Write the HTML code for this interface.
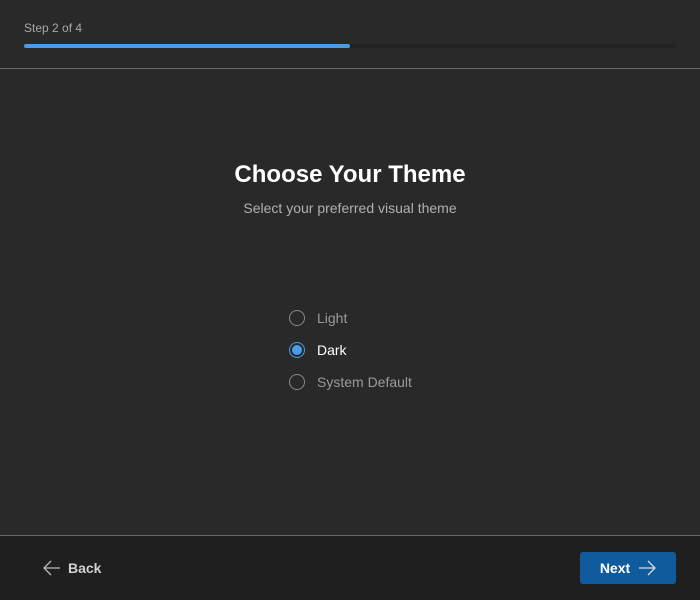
<!DOCTYPE html>
<html><head><meta charset="utf-8"><style>
*{margin:0;padding:0;box-sizing:border-box}
body{width:700px;height:600px;background:#292929;font-family:"Liberation Sans",sans-serif;position:relative;overflow:hidden}
.step{position:absolute;left:24px;top:21px;font-size:12px;color:#a8a8a8}
.track{position:absolute;left:24px;top:44px;width:652px;height:4px;background:#232323;border-radius:2px}
.fill{width:326px;height:4px;background:#4a9bea;border-radius:2px}
.hr1{position:absolute;left:0;top:68px;width:700px;height:1px;background:#6a6a6a}
h1{position:absolute;top:161px;width:700px;text-align:center;font-size:24px;font-weight:bold;color:#fff}
.sub{position:absolute;top:200px;width:700px;text-align:center;font-size:14px;color:#b0b0b0}
.opt{position:absolute;left:289px;height:16px;display:flex;align-items:center;font-size:14px;color:#9a9a9a}
.r{width:16px;height:16px;border:1.5px solid #8a8a8a;border-radius:50%;margin-right:12px;display:flex;align-items:center;justify-content:center}
.sel .r{border-color:#4a9bea}
.sel .r::after{content:"";width:10px;height:10px;border-radius:50%;background:#4a9bea}
.sel{color:#fff}
.foot{position:absolute;left:0;top:535px;width:700px;height:65px;background:#1f1f1f;border-top:1px solid #6a6a6a}
.back{position:absolute;left:43px;top:24px;font-size:14px;font-weight:bold;color:#d0d0d0;display:flex;align-items:center}
.next{position:absolute;left:580px;top:16px;width:96px;height:32px;background:#105a9e;border-radius:3px;color:#fff;font-size:14px;font-weight:bold;display:flex;align-items:center;justify-content:center}
svg{display:block}
</style></head><body>
<div class="step">Step 2 of 4</div>
<div class="track"><div class="fill"></div></div>
<div class="hr1"></div>
<h1>Choose Your Theme</h1>
<div class="sub">Select your preferred visual theme</div>
<div class="opt" style="top:310px"><div class="r"></div>Light</div>
<div class="opt sel" style="top:342px"><div class="r"></div>Dark</div>
<div class="opt" style="top:374px"><div class="r"></div>System Default</div>
<div class="foot">
<div class="back"><svg width="18" height="16" viewBox="0 0 18 16" style="margin-right:7px"><path d="M17 8H2M8 1L1 8l7 7" fill="none" stroke="#bbb" stroke-width="1.3"/></svg>Back</div>
<div class="next">Next<svg width="18" height="16" viewBox="0 0 18 16" style="margin-left:8px"><path d="M1 8h15M10 1l7 7-7 7" fill="none" stroke="#ddd" stroke-width="1.3"/></svg></div>
</div>
</body></html>
